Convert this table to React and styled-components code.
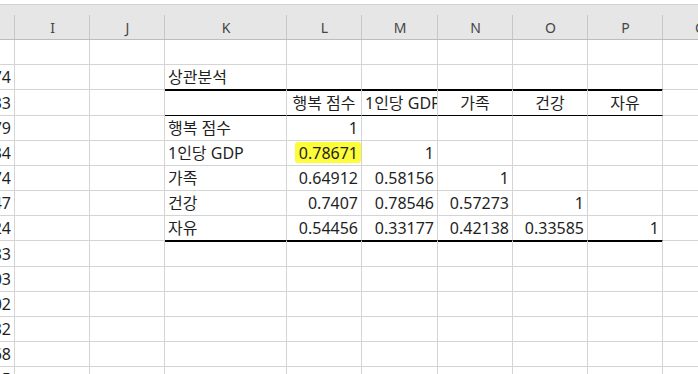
import React from 'react';
import styled, {createGlobalStyle} from 'styled-components';

const GlobalStyle = createGlobalStyle`
    html, body {
        margin: 0;
        padding: 0;
        background: #fff;
        overflow: hidden;
    }
    body {
        font-family: "Noto Sans", "Noto Sans CJK KR", sans-serif;
        color: #1f1f1f;
    }
`

const COLUMNS = '15px 75px 75px 122px 75px 76px 75px 75px 75px 75px';
const LETTERS = ['', 'I', 'J', 'K', 'L', 'M', 'N', 'O', 'P', 'Q'];

// column H is cut off at the left edge, only the last digits show
const clipped = ['', '0.3874', '0.5233', '0.6479', '0.7034', '0.4174', '0.5847', '0.2924',
    '0.6633', '0.4403', '0.3902', '0.5532', '0.4768', '0.5'];

const table = [
    [],
    ['상관분석'],
    ['', '행복 점수', '1인당 GDP', '가족', '건강', '자유'],
    ['행복 점수', '1'],
    ['1인당 GDP', '0.78671', '1'],
    ['가족', '0.64912', '0.58156', '1'],
    ['건강', '0.7407', '0.78546', '0.57273', '1'],
    ['자유', '0.54456', '0.33177', '0.42138', '0.33585', '1'],
];

function App(){
    const rows = clipped.map((h, r) => {
        const t = table[r] || [];
        return {h, label: t[0] || '', values: [1, 2, 3, 4, 5].map(i => t[i] || '')};
    });

    return(
        <Sheet>
            <GlobalStyle />
            <TopStrip />
            <HeaderRow>
                {LETTERS.map((l, i) => <HeaderCell key={i}>{l}</HeaderCell>)}
            </HeaderRow>
            {rows.map((row, r) => {
                const inTable = r >= 1 && r <= 8;
                const bottom = r === 1 || r === 2 || r === 7 ? '#000' : null;
                const top = r === 2 || r === 8;
                const tableProps = inTable ? {$bottom: bottom, $top: top} : {};
                return (
                    <Row key={r} $tall={r === 2 || r === 8}>
                        <Cell $align="flex-end">{row.h}</Cell>
                        <Cell />
                        <Cell />
                        <Cell $align="flex-start" {...tableProps}>{row.label}</Cell>
                        {row.values.map((v, c) => (
                            <Cell
                                key={c}
                                $align={r === 2 ? 'safe center' : 'flex-end'}
                                {...tableProps}
                            >
                                {r === 4 && c === 0 && <Marker />}
                                <Value>{v}</Value>
                            </Cell>
                        ))}
                        <Cell />
                    </Row>
                );
            })}
        </Sheet>
    )
}

export default App;

const Sheet = styled.div`
    width: 698px;
    height: 374px;
    overflow: hidden;
`
const TopStrip = styled.div`
    height: 4px;
    background: #fff;
    border-bottom: 1px solid #d2d2d2;
`
const HeaderRow = styled.div`
    display: grid;
    grid-template-columns: ${COLUMNS};
    height: 35px;
    box-sizing: border-box;
    background: #e6e6e6;
    border-bottom: 1px solid #bdbdbd;
`
const HeaderCell = styled.div`
    position: relative;
    display: flex;
    align-items: center;
    justify-content: center;
    padding-top: 10px;
    box-sizing: border-box;
    font-size: 14px;
    color: #454545;
    white-space: nowrap;

    &::after {
        content: '';
        position: absolute;
        right: 0;
        top: 10px;
        bottom: 0;
        width: 1px;
        background: #c6c6c6;
    }
`
const Row = styled.div`
    display: grid;
    grid-template-columns: ${COLUMNS};
    height: ${p => p.$tall ? 26 : 25}px;
`
const Cell = styled.div`
    position: relative;
    display: flex;
    align-items: center;
    justify-content: ${p => p.$align || 'flex-start'};
    padding: 0 3px;
    box-sizing: border-box;
    border-right: 1px solid #d4d4d4;
    border-bottom: 1px solid ${p => p.$bottom || '#d4d4d4'};
    box-shadow: ${p => p.$top ? 'inset 0 1px 0 #000' : 'none'};
    overflow: hidden;
    white-space: nowrap;
    font-size: 16px;
    line-height: 1;
`
const Value = styled.span`
    position: relative;
    z-index: 1;
`
const Marker = styled.span`
    position: absolute;
    left: 8px;
    right: 0;
    top: 1px;
    bottom: 2px;
    background: #fdfd3a;
    border-radius: 3px;
`
